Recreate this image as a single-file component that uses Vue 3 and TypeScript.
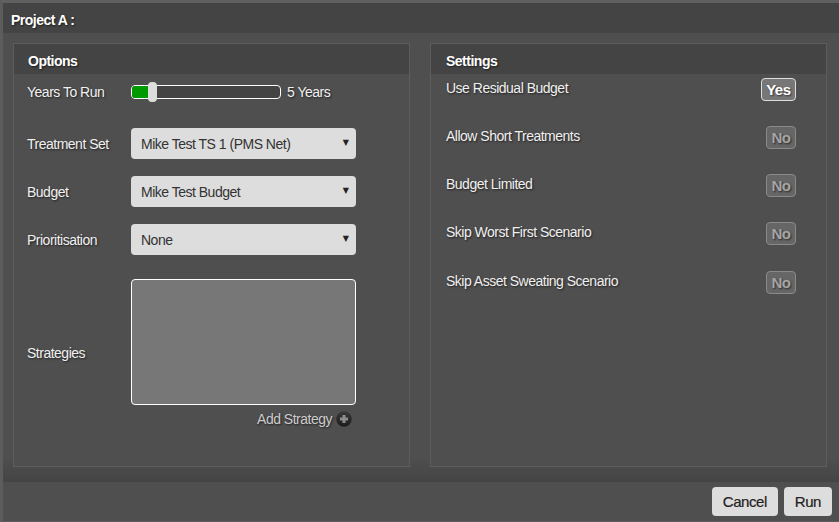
<script setup lang="ts">
interface Setting { label: string; on: boolean }
const settings: Setting[] = [
  { label: 'Use Residual Budget', on: true },
  { label: 'Allow Short Treatments', on: false },
  { label: 'Budget Limited', on: false },
  { label: 'Skip Worst First Scenario', on: false },
  { label: 'Skip Asset Sweating Scenario', on: false },
]
const selects = [
  { label: 'Treatment Set', value: 'Mike Test TS 1 (PMS Net)' },
  { label: 'Budget', value: 'Mike Test Budget' },
  { label: 'Prioritisation', value: 'None' },
]
</script>

<template>
  <div class="dialog">
    <header class="title">Project A :</header>
    <main class="content">
      <section class="panel">
        <h2 class="panel-head">Options</h2>
        <div class="options">
          <div class="row years">
            <span class="label">Years To Run</span>
            <div class="slider">
              <div class="fill"></div>
              <div class="thumb"></div>
            </div>
            <span class="years-text">5 Years</span>
          </div>
          <div v-for="s in selects" :key="s.label" class="row select-row">
            <span class="label">{{ s.label }}</span>
            <div class="select">
              <span>{{ s.value }}</span>
              <span class="arrow">▼</span>
            </div>
          </div>
          <div class="row strategies">
            <span class="label strategies-label">Strategies</span>
            <div class="strategy-box"></div>
          </div>
          <div class="add">
            <span>Add Strategy</span>
            <svg class="plus" viewBox="0 0 16 16" width="16" height="16">
              <defs>
                <linearGradient id="plusFill" x1="0" y1="0" x2="0" y2="1">
                  <stop offset="0" stop-color="#3a3a3a" />
                  <stop offset="1" stop-color="#1c1c1c" />
                </linearGradient>
              </defs>
              <circle cx="8" cy="8" r="7.8" fill="url(#plusFill)" />
              <path d="M6.500 4h3v2.500H12v3H9.500V12h-3V9.500H4v-3h2.500z" fill="#8c8c8c" />
            </svg>
          </div>
        </div>
      </section>
      <section class="panel">
        <h2 class="panel-head settings-head">Settings</h2>
        <div class="settings">
          <div v-for="s in settings" :key="s.label" class="setting">
            <span class="setting-label">{{ s.label }}</span>
            <span class="toggle" :class="{ on: s.on }">{{ s.on ? 'Yes' : 'No' }}</span>
          </div>
        </div>
      </section>
    </main>
    <footer class="footer">
      <button class="btn">Cancel</button>
      <button class="btn">Run</button>
    </footer>
  </div>
</template>

<style>
html, body { margin: 0; padding: 0; background: #4f4f4f; }
</style>

<style scoped>
.dialog {
  box-sizing: border-box;
  width: 839px;
  height: 522px;
  display: flex;
  flex-direction: column;
  background: #4f4f4f;
  border-top: 3px solid #606060;
  border-left: 3px solid #5c5c5c;
  border-bottom: 1px solid #5c5c5c;
  font-family: "Liberation Sans", Arial, sans-serif;
  font-size: 14px;
  letter-spacing: -0.5px;
  color: #f0f0f0;
  text-shadow: 1px 1px 2px rgba(0, 0, 0, 0.6);
}
.title {
  height: 30px;
  flex: none;
  background: #444;
  box-sizing: border-box;
  padding: 9px 0 0 8px;
  line-height: 16px;
  font-weight: 700;
  color: #fff;
}
.content {
  flex: 1;
  min-height: 0;
  box-sizing: border-box;
  padding: 10px 12px 15px 10px;
  display: grid;
  grid-template-columns: 397px 397px;
  column-gap: 20px;
  background: linear-gradient(to bottom, #4f4f4f 0, #4f4f4f 424px, #444 449px);
}
.panel {
  box-sizing: border-box;
  border: 1px solid #5d5d5d;
  background: #4f4f4f;
  height: 424px;
}
.panel-head {
  margin: 0;
  height: 30px;
  box-sizing: border-box;
  background: #444;
  padding: 9px 0 0 14px;
  font-size: 14px;
  line-height: 16px;
  font-weight: 700;
  color: #fff;
}
.settings-head { padding-left: 15px; }
.options { padding: 0 0 0 13px; }
.row { display: flex; align-items: center; }
.label { width: 104px; flex: none; }
.strategies-label { padding-top: 22px; }
.years { height: 36px; }
.slider {
  position: relative;
  box-sizing: border-box;
  width: 150px;
  height: 14px;
  border: 1px solid #fff;
  border-radius: 4px;
  background: #444;
}
.fill {
  width: 16px;
  height: 12px;
  background: #090;
  border-radius: 3px 0 0 3px;
}
.thumb {
  position: absolute;
  left: 16px;
  top: -4px;
  width: 9px;
  height: 20px;
  background: #ddd;
  border-radius: 4px;
}
.years-text { margin-left: 6px; }
.select-row { height: 31px; margin-bottom: 17px; }
.years + .select-row { margin-top: 18px; }
.select {
  box-sizing: border-box;
  width: 225px;
  height: 31px;
  display: flex;
  align-items: center;
  justify-content: space-between;
  padding: 0 7px 0 10px;
  background: #ddd;
  border-radius: 4px;
  color: #333;
  text-shadow: none;
}
.arrow {
  font-size: 8px;
  color: #222;
  letter-spacing: 0;
  font-family: "DejaVu Sans", sans-serif;
  position: relative;
  top: -1px;
}
.strategies { height: 126px; margin-top: 24px; }
.strategy-box {
  box-sizing: border-box;
  width: 225px;
  height: 126px;
  background: #777;
  border: 1px solid #fff;
  border-radius: 4px;
}
.add {
  width: 325px;
  margin-top: 5px;
  display: flex;
  justify-content: flex-end;
  align-items: center;
  gap: 4px;
  color: #ccc;
  height: 17px;
}
.plus { flex: none; }
.settings { padding: 0 30px 0 15px; }
.setting {
  height: 48.15px;
  display: flex;
  justify-content: space-between;
  align-items: flex-start;
}
.setting-label { line-height: 16px; margin-top: 6px; }
.toggle {
  box-sizing: border-box;
  height: 23px;
  margin-top: 4px;
  line-height: 21px;
  padding: 0 4.5px;
  border: 1px solid #8a8a8a;
  border-radius: 4px;
  background: #666;
  color: #a5a5a5;
  font-size: 15px;
  font-weight: 700;
  letter-spacing: -0.5px;
}
.toggle.on {
  background: #777;
  border-color: #ddd;
  color: #fff;
}
.footer {
  flex: none;
  height: 39px;
  box-sizing: border-box;
  display: flex;
  justify-content: flex-end;
  align-items: flex-start;
  gap: 6px;
  padding: 5px 7px 0 0;
  background: #4f4f4f;
}
.btn {
  height: 29px;
  box-sizing: border-box;
  padding: 0 11px;
  border: none;
  border-radius: 4px;
  background: #ddd;
  color: #222;
  font-family: inherit;
  font-size: 15px;
  letter-spacing: -0.45px;
  font-weight: 400;
  -webkit-text-stroke: 0.2px #222;
}
</style>
